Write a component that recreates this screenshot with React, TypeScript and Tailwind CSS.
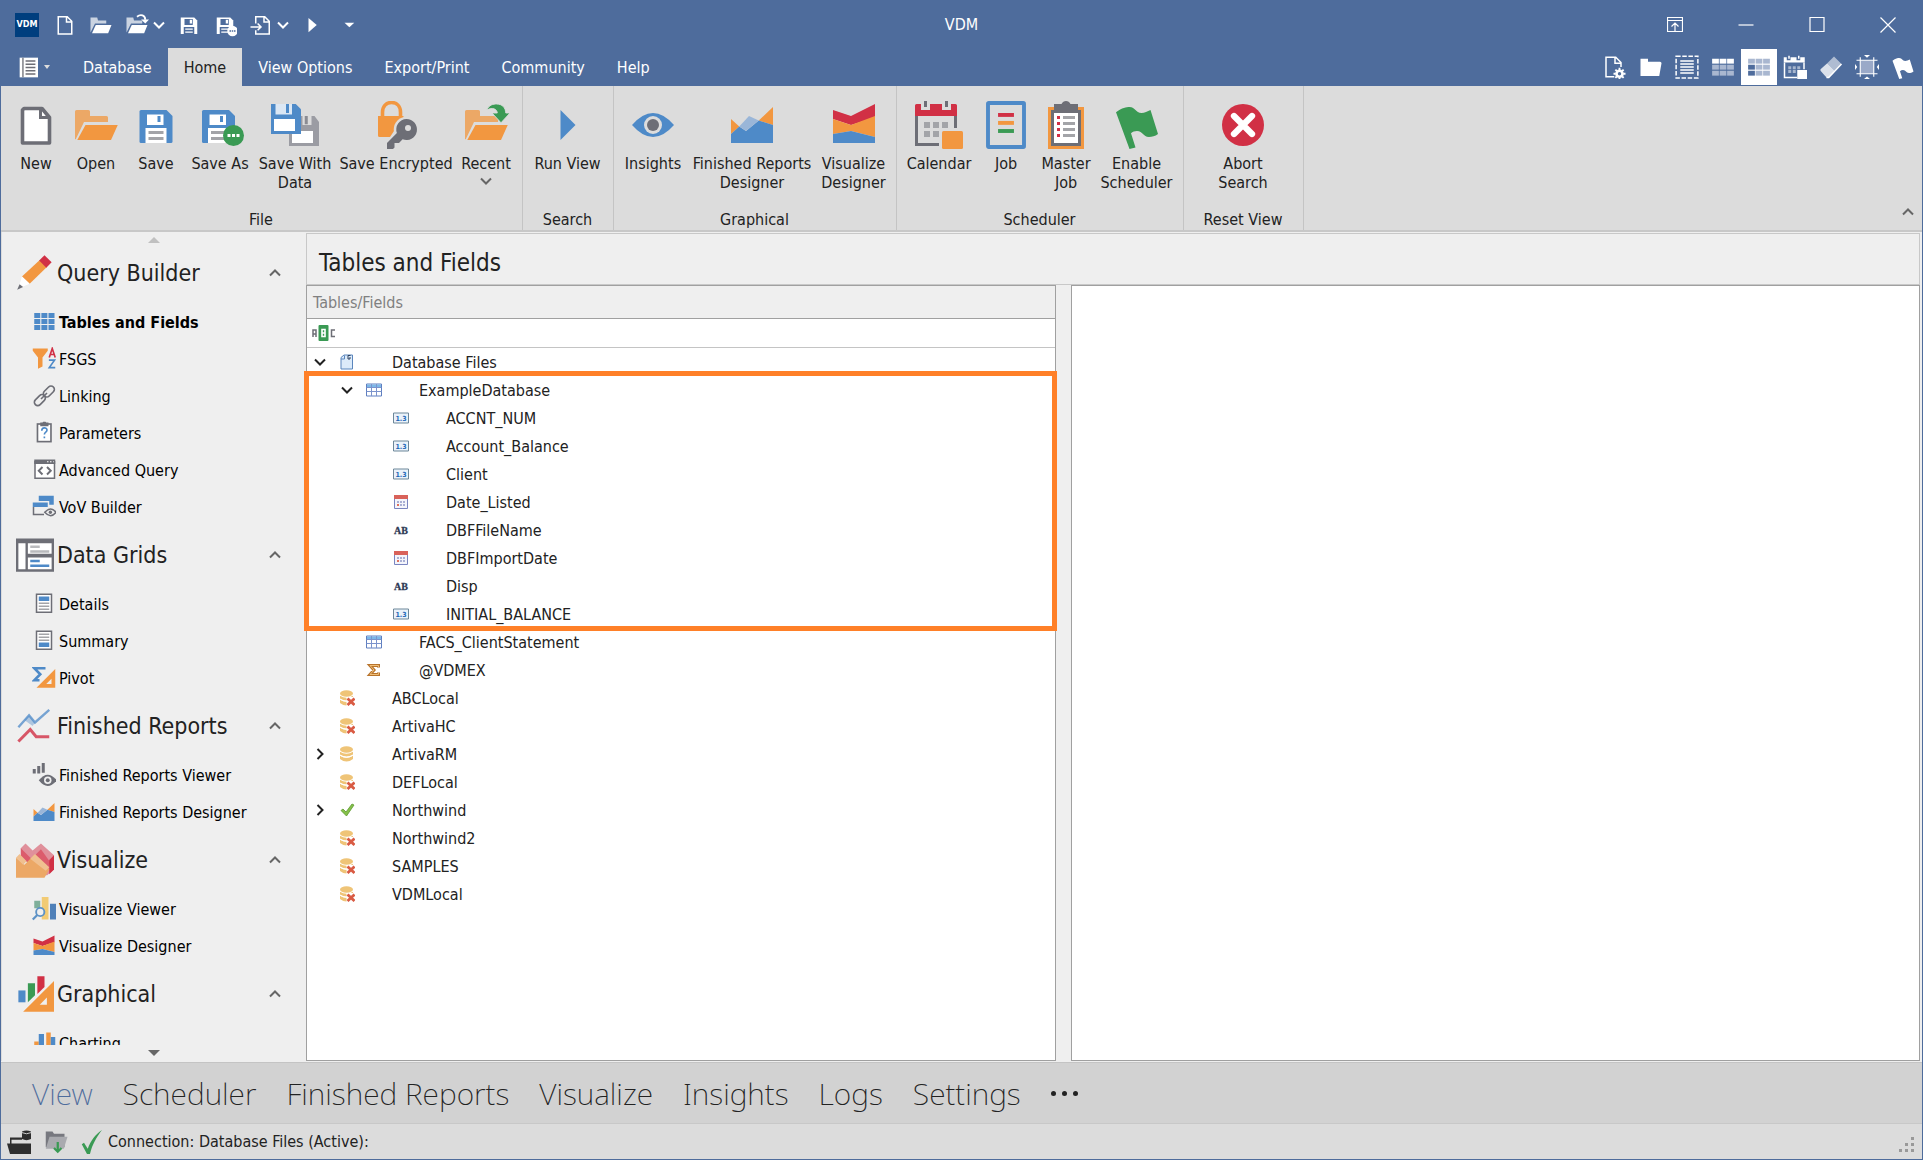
import type { ReactNode } from 'react'

const BLUE = '#4e8ac8'
const ORANGE = '#f29740'
const ORANGE_LIGHT = '#eca866'
const RED = '#d13045'
const GREEN = '#3a9a54'
const GRAY = '#6d6e76'
const GRAY_LIGHT = '#a3a4a8'

function Svg({ className = 'size-6', box = '0 0 32 32', children }: { className?: string; box?: string; children: ReactNode }) {
    return (
        <svg className={`shrink-0 ${className}`} viewBox={box} fill="none" aria-hidden="true">
            {children}
        </svg>
    )
}

function Chevron({ className = '', d = 'M1 1.5l5 5 5-5' }: { className?: string; d?: string }) {
    return (
        <svg className={`shrink-0 w-3 h-2 ${className}`} viewBox="0 0 12 8" fill="none" stroke="currentColor" strokeWidth="2" aria-hidden="true">
            <path d={d} />
        </svg>
    )
}

/* ---- ribbon drawings, 32 unit grid ---- */

const newDoc = (
    <>
        <path d="M8 5h12l5 6v17H7V6z" fill="#fff" stroke={GRAY} strokeWidth="2.4" strokeLinejoin="round" />
        <path d="M19 5v6h6" stroke={GRAY} strokeWidth="2" />
    </>
)

const openFolder = (
    <>
        <path d="M2 7q0-1 1-1h8q1 0 1 1v3h11q1 0 1 1v3H8L2.5 25.500H2z" fill={ORANGE_LIGHT} />
        <path d="M9 16h21.500L26 26H3.500z" fill={ORANGE} />
    </>
)

const floppy = (
    <>
        <path d="M6 6h17l4 4v17q0 1-1 1H6q-1 0-1-1V7q0-1 1-1z" fill={BLUE} />
        <path d="M10 9h11v7H10z" fill="#fff" />
        <path d="M17 10h2v4h-2z" fill={BLUE} />
        <path d="M9 18h14v10H9z" fill="#fff" />
        <path d="M11 21h10M11 25h10" stroke={GRAY_LIGHT} strokeWidth="2" />
    </>
)

const saveAs = (
    <>
        <g transform="translate(-1 0)">{floppy}</g>
        <circle cx="25" cy="23" r="7" fill={GREEN} />
        <path d="M21 22h2v2h-2zM24 22h2v2h-2zM27 22h2v2h-2z" fill="#fff" />
    </>
)

const saveWithData = (
    <>
        <path d="M12 10h17l3 4v16H12z" fill="#9b9ca3" />
        <path d="M21 10h6v6h-6z" fill="#dcdcdc" />
        <path d="M22.500 10h2v5.500h-2z" fill="#8a8b92" />
        <path d="M14 20h14v8H14z" fill="#fff" />
        <path d="M0 2h16.500L20 5.500V22H0z" fill={BLUE} />
        <path d="M3 2h11v7H3z" fill="#dbe7f4" />
        <path d="M10 2h2v6h-2z" fill={BLUE} />
        <path d="M2 12h14v8H2z" fill="#fff" />
    </>
)

const saveEncrypted = (
    <>
        <path d="M7 11V7.500C7 3.500 9.500 1 13 1s6 2.500 6 6.500V11" stroke={ORANGE} strokeWidth="2.400" />
        <path d="M4 10h17v3l-5 5-4 6H5q-1 0-1-1z" fill={ORANGE} />
        <circle cx="23" cy="19" r="8.500" fill="#dcdcdc" />
        <path d="M23 12a7 7 0 1 1-2.600 13.500L18 28h-3v3l-1 1h-4v-4l6.600-6.600A7 7 0 0 1 23 12z" fill={GRAY} />
        <circle cx="24" cy="18" r="2" fill="#dcdcdc" />
    </>
)

const recent = (
    <>
        {openFolder}
        <path d="M16.500 6C18 2.500 21 2 23 2c4 0 6 2.500 6.200 6H32l-6 6.500L20 8h3.500c0-2.500-3-4-7-2z" fill={GREEN} stroke="#dcdcdc" strokeWidth=".6" />
    </>
)

const play = <path d="M11 6l10 10-10 10z" fill={BLUE} />

const eye = (
    <>
        <path d="M2 16Q9 8 16 8t14 8q-7 8-14 8T2 16z" fill={BLUE} />
        <circle cx="16" cy="16" r="6" fill="#dcdcdc" />
        <circle cx="16" cy="16" r="4" fill={GRAY} />
    </>
)

const reportArea = (
    <>
        <path d="M2 12l5.500 5L2 22zM30 4l-9.500 9L30 16z" fill={ORANGE} />
        <path d="M2 22l5.500-5 4.500 3 8.500-7L30 16v12H2z" fill={BLUE} />
        <path d="M7.500 17L14 10l6.500 3L12 20z" fill="#9ab6d8" />
    </>
)

const visualizeArea = (
    <>
        <path d="M2 6l12 4 16-8v9l-16 5-12-4z" fill={RED} />
        <path d="M2 12l12 4 16-6v14l-16-4-12 2z" fill={ORANGE} />
        <path d="M2 22l12-2 16 4v4H2z" fill={BLUE} />
    </>
)

const calendar = (
    <>
        <path d="M1 10v19h15M27 10v8" stroke={GRAY} strokeWidth="2" />
        <path d="M0 3q0-1 1-1h3v4h6V2h8v4h6V2h3q1 0 1 1v7H0z" fill={RED} />
        <path d="M6 0h2v4H6zM20 0h2v4h-2z" fill={GRAY} />
        <path d="M6 14h4v4H6zM12 14h4v4h-4zM18 14h4v4h-4zM6 20h4v4H6zM12 20h4v4h-4z" fill={GRAY_LIGHT} />
        <rect x="18" y="20" width="14" height="12" rx="1" fill={ORANGE} />
    </>
)

const job = (
    <>
        <rect x="4" y="1.300" width="24" height="29.400" rx=".5" stroke={BLUE} strokeWidth="2.600" />
        <path d="M10.700 9.300h10.600" stroke={RED} strokeWidth="2.600" />
        <path d="M10.700 14.600h10.600" stroke={ORANGE} strokeWidth="2.600" />
        <path d="M10.700 20h10.600" stroke={GREEN} strokeWidth="2.600" />
    </>
)

const masterJob = (
    <>
        <path d="M4 4h24v28H4z" fill={ORANGE} />
        <path d="M6 6h2V2h5q1-2 3-2t3 2h5v4h2v24H6z" fill={GRAY} />
        <path d="M8 8h16v20H8z" fill="#fff" />
        <path d="M10 10h2v2h-2zM10 14h2v2h-2zM10 18h2v2h-2zM10 22h2v2h-2z" fill={RED} />
        <path d="M14 11h8M14 15h8M14 19h8M14 23h8" stroke={GRAY_LIGHT} strokeWidth="2" />
    </>
)

const flagPath = 'M2 7.500C6 4.500 9 4 11 4c4 0 4 4 8 4 2 0 4-1 6-2l5 16c-2 1.500-4 2-6 2-4 0-4-4-8-4-1.500 0-3 .5-4 1.500L15 31l-4 1z'

const abort = (
    <>
        <circle cx="16" cy="16" r="14" fill={RED} />
        <path d="M10 10l12 12M22 10L10 22" stroke="#fff" strokeWidth="4.200" strokeLinecap="round" />
    </>
)

const ribbon = [
    {
        title: 'File',
        items: [
            { label: 'New', icon: newDoc, width: 'w-[60px]' },
            { label: 'Open', icon: openFolder, width: 'w-[60px]' },
            { label: 'Save', icon: floppy, width: 'w-[60px]' },
            { label: 'Save As', icon: saveAs, width: 'w-[68px]' },
            { label: 'Save With Data', icon: saveWithData, width: 'w-[82px]' },
            { label: 'Save Encrypted', icon: saveEncrypted, width: 'w-[120px]' },
            { label: 'Recent', icon: recent, width: 'w-[60px]', menu: true },
        ],
    },
    { title: 'Search', items: [{ label: 'Run View', icon: play, width: 'w-[79px]' }] },
    {
        title: 'Graphical',
        items: [
            { label: 'Insights', icon: eye, width: 'w-[68px]' },
            { label: 'Finished Reports Designer', icon: reportArea, width: 'w-[130px]' },
            { label: 'Visualize Designer', icon: visualizeArea, width: 'w-[73px]' },
        ],
    },
    {
        title: 'Scheduler',
        items: [
            { label: 'Calendar', icon: calendar, width: 'w-[74px]' },
            { label: 'Job', icon: job, width: 'w-[60px]' },
            { label: 'Master Job', icon: masterJob, width: 'w-[60px]' },
            { label: 'Enable Scheduler', icon: <path d={flagPath} fill={GREEN} />, width: 'w-[81px]' },
        ],
    },
    { title: 'Reset View', items: [{ label: 'Abort Search', icon: abort, width: 'w-[108px] px-5' }] },
]

/* ---- title bar ---- */

const wDoc = <path d="M7 5h12l6 6v17H7zM18 5v7h7" stroke="#fff" strokeWidth="2" />
const wOpen = (
    <>
        <path d="M2 6h9l1 4h11v4H8L2 26z" fill="#fff" opacity=".7" />
        <path d="M9 16h21l-4.500 11H4z" fill="#fff" />
    </>
)
const wFloppy = (
    <>
        <path d="M5 6h18l4 4v18H5z" fill="#fff" />
        <path d="M10 8h11v8H10zM9 18.500h14V28H9z" fill="#4e6c9c" />
        <path d="M17 9h3v5h-3z" fill="#fff" />
        <path d="M11 21.500h10M11 25.500h10" stroke="#fff" strokeWidth="1.500" />
    </>
)

const quickAccess = [
    { label: 'New', icon: wDoc },
    { label: 'Open', icon: wOpen },
    {
        label: 'Recent',
        menu: true,
        icon: (
            <>
                {wOpen}
                <path d="M16 5c5-4 11-2 11 4" stroke="#fff" strokeWidth="2.500" />
                <path d="M21.500 8.500H32L27 14z" fill="#fff" />
            </>
        ),
    },
    { label: 'Save', icon: wFloppy },
    {
        label: 'Save As',
        icon: (
            <>
                {wFloppy}
                <circle cx="26" cy="24" r="7" fill="#fff" />
                <path d="M22 23h2v2h-2zM25 23h2v2h-2zM28 23h2v2h-2z" fill="#4e6c9c" />
            </>
        ),
    },
    { label: 'Import', menu: true, icon: <path d="M9 14V5h12l6 6v17H9v-5M20 5v7h7M2 18.500h14M11.500 14l4.500 4.500-4.500 4.500" stroke="#fff" strokeWidth="2" /> },
    { label: 'Run', icon: <path d="M10 6.500l11 9.500-11 9.500z" fill="#fff" /> },
    { label: 'Customize', icon: <path d="M10 13h13l-6.500 6z" fill="#fff" /> },
]

const windowButtons = [
    { label: 'Ribbon display', d: 'M.5.500h15v14H.5zM.5 3.500h15M8 14V7M4.500 9.500L8 6l3.500 3.500' },
    { label: 'Minimize', d: 'M.5 8h15' },
    { label: 'Maximize', d: 'M1 .5h14v14H1z' },
    { label: 'Close', d: 'M.5.500l15 15M15.500.500l-15 15' },
]

const tabs = ['Database', 'Home', 'View Options', 'Export/Print', 'Community', 'Help']

function cells(first: (r: number, c: number) => boolean, on: string, off: string) {
    return [0, 1, 2].flatMap(r =>
        [0, 1, 2].map(c => (
            <rect key={`${r}${c}`} x={1.500 + c * 10} y={5 + r * 8} width="9" height="6.500" fill={first(r, c) ? on : off} />
        ))
    )
}

const viewTools = [
    {
        label: 'View settings',
        icon: (
            <>
                <path d="M15 29H4V3h13l7 7v6M16 3v8h8" stroke="#fff" strokeWidth="2" />
                <circle cx="22" cy="25" r="4" stroke="#fff" strokeWidth="3.500" />
                <path d="M22 17v3M22 30v3M14 25h3M27 25h3M16.500 19.500l2 2M25.500 28.500l2 2M27.500 19.500l-2 2M18.500 28.500l-2 2" stroke="#fff" strokeWidth="2.500" />
            </>
        ),
    },
    { label: 'Folder', icon: <path d="M2 5h10v4h16q2 0 2 2l-3 17H2z" fill="#fff" /> },
    {
        label: 'Select all',
        icon: (
            <>
                <rect x="1.500" y="1.500" width="29" height="29" stroke="#fff" strokeWidth="2" strokeDasharray="6 2.200" />
                <path d="M7 8h18M7 12h18M7 16h18M7 20h18M7 24h18" stroke="#fff" strokeWidth="2" />
            </>
        ),
    },
    { label: 'Header row', icon: <>{cells(r => r === 0, '#ffffff', '#a9b7d0')}</> },
    { label: 'Field grid', active: true, icon: <>{cells((r, c) => c === 0 && r > 0, '#4e6c9c', '#a9b7d0')}</> },
    {
        label: 'Calendar',
        icon: (
            <>
                <path d="M2 10v20h17M28 10v9" stroke="#fff" strokeWidth="2" />
                <path d="M1 3h4v4h5V3h8v4h5V3h6v7H1z" fill="#fff" />
                <path d="M7 1h2v4H7zM20 1h2v4h-2z" fill="#fff" />
                <path d="M7 15h4v4H7zM13 15h4v4h-4zM19 15h4v4h-4zM7 20h4v4H7zM13 20h4v4h-4z" fill="#fff" opacity=".5" />
                <path d="M19 20h14v12H19z" fill="#fff" />
            </>
        ),
    },
    {
        label: 'Clear',
        icon: (
            <>
                <path d="M20 2l10 10-9 9-10-10z" fill="#fff" opacity=".55" />
                <path d="M11 11l10 10-8 9h-3l-8-9v-2z" fill="#fff" opacity=".8" />
                <path d="M30 12L13 30h-3" stroke="#fff" strokeWidth="2" />
            </>
        ),
    },
    {
        label: 'Fit',
        icon: (
            <>
                <path d="M7 7h18v18H7z" fill="#9aa9c8" />
                <path d="M7 3v26M25 3v26M2 7h28M2 25h28" stroke="#fff" strokeWidth="1.500" />
                <path d="M12 0h8l-4 3.500zM12 32h8l-4-3.500zM0 12v8l3-4zM32 12v8l-3-4z" fill="#fff" />
            </>
        ),
    },
    { label: 'Flag', icon: <path d={flagPath} fill="#fff" /> },
]

/* ---- side navigation ---- */

const pencil = (
    <>
        <path d="M5 19L20 5l6 6-14.500 14z" fill={ORANGE} />
        <path d="M19.500 5.500L24 1l6 6-4.500 4.500z" fill={RED} />
        <path d="M5 19l6.500 6L2 29z" fill="#fff" />
        <path d="M3 25.500l3 2.300L1 30z" fill={GRAY} />
    </>
)
const dataGrid = (
    <>
        <path d="M0 2h32v28H0z" fill={GRAY} />
        <path d="M2 6h6v22H2zM10 6h20v9H10zM10 18h20v10H10z" fill="#fff" />
        <path d="M12 9h8M12 13h16" stroke="#b9babd" strokeWidth="2" />
        <path d="M12 21h8M12 25h16" stroke={BLUE} strokeWidth="2" />
    </>
)
const trendLines = (
    <>
        <path d="M2 17l9-10 5 6L28 2.500" stroke={BLUE} strokeWidth="2" opacity=".75" />
        <path d="M7 11l4-4 5 6-2 3z" fill={BLUE} opacity=".4" />
        <path d="M2 29l10-10 5 6h11" stroke={RED} strokeWidth="2.500" opacity=".8" />
    </>
)
const area3d = (
    <>
        <path d="M4 6l4-4 6 6 7-6 11 10v12l-6 5-20-14z" fill="#e0909b" />
        <path d="M4 6l9 9 8-8 8 11-3 8L4 15z" fill="#dc5c6c" />
        <path d="M28 16l4-4v12l-4 4z" fill={RED} />
        <path d="M0 14l7 6 8-8 13 12-4 7H0z" fill={ORANGE_LIGHT} />
        <path d="M0 14l3-3 6 6-3 3zM12 15l4-4 12 11-3 3z" fill="#f0c090" />
    </>
)
const barsRuler = (
    <>
        <path d="M2 13h6v10H2z" fill={BLUE} />
        <path d="M10 7h6v10l-6 6z" fill={GREEN} />
        <path d="M18 1h6v9l-6 6z" fill={RED} />
        <path d="M32 5v26H6z" fill={ORANGE} />
        <path d="M26 19v6h-6z" fill="#efefef" />
    </>
)

const sections = [
    {
        title: 'Query Builder',
        icon: pencil,
        items: [
            {
                label: 'Tables and Fields',
                current: true,
                icon: <path d="M3 4h8v6.500H3zM12.500 4h8v6.500h-8zM22 4h8v6.500h-8zM3 12h8v6.500H3zM12.500 12h8v6.500h-8zM22 12h8v6.500h-8zM3 20h8v6.500H3zM12.500 20h8v6.500h-8zM22 20h8v6.500h-8z" fill={BLUE} />,
            },
            {
                label: 'FSGS',
                icon: (
                    <>
                        <path d="M1 2h20v3l-7 9v12l-6 3V14L1 5z" fill={ORANGE} />
                        <path d="M23 14l4-12 4 12M24.500 10h5" stroke={RED} strokeWidth="2.200" />
                        <path d="M22.500 17.500H30L23 27.500h8" stroke={BLUE} strokeWidth="2.200" />
                    </>
                ),
            },
            {
                label: 'Linking',
                icon: (
                    <g stroke={GRAY} strokeWidth="2.200">
                        <rect x="14" y="5.500" width="17" height="9" rx="4.500" transform="rotate(-45 22.500 10)" />
                        <rect x="2" y="17" width="17" height="9" rx="4.500" transform="rotate(-45 10.500 21.500)" />
                        <path d="M12 20l8-8" />
                    </g>
                ),
            },
            {
                label: 'Parameters',
                icon: (
                    <>
                        <rect x="7.300" y="4" width="18" height="23.500" fill="#fff" stroke={GRAY} strokeWidth="2.200" />
                        <path d="M11 2h3l1-1h3l1 1h3v5H11z" fill={GRAY} />
                        <path d="M13 13c0-5 7-5 7-1 0 3-3.500 2.500-3.500 6M16.500 20.500V23" stroke={BLUE} strokeWidth="2.200" />
                    </>
                ),
            },
            {
                label: 'Advanced Query',
                icon: (
                    <>
                        <path d="M4 5h26v22H4z" fill="#fff" stroke={GRAY} strokeWidth="2" />
                        <path d="M3 2h28v6H3z" fill={GRAY} />
                        <path d="M20 5h2M24 5h2M28 5h1" stroke="#fff" strokeWidth="1.500" />
                        <path d="M14 12l-5 5 5 5M20 12l5 5-5 5" stroke={GRAY} strokeWidth="2.600" />
                    </>
                ),
            },
            {
                label: 'VoV Builder',
                icon: (
                    <>
                        <path d="M9 1h20v12h-6V8H9z" fill={BLUE} />
                        <path d="M1 10h20v6H1z" fill={BLUE} />
                        <path d="M2 16v10h14" stroke={GRAY} strokeWidth="2" />
                        <path d="M17 23q8-9 15 0-7 9-15 0z" fill="#efefef" stroke={GRAY} strokeWidth="2" />
                        <circle cx="24.500" cy="23" r="2.200" fill={GRAY} />
                    </>
                ),
            },
        ],
    },
    {
        title: 'Data Grids',
        icon: dataGrid,
        items: [
            {
                label: 'Details',
                icon: (
                    <>
                        <rect x="6" y="3" width="20" height="24" fill="#fff" stroke={GRAY} strokeWidth="2" />
                        <path d="M9 6h14v6H9z" fill={BLUE} />
                        <path d="M9 15h14M9 19h14M9 23h14" stroke={GRAY_LIGHT} strokeWidth="2" />
                    </>
                ),
            },
            {
                label: 'Summary',
                icon: (
                    <>
                        <rect x="6" y="3" width="20" height="24" fill="#fff" stroke={GRAY} strokeWidth="2" />
                        <path d="M9 18h14v6H9z" fill={BLUE} />
                        <path d="M9 7h14M9 11h14M9 15h14" stroke={GRAY_LIGHT} strokeWidth="2" />
                    </>
                ),
            },
            {
                label: 'Pivot',
                icon: (
                    <>
                        <path d="M18 3H3l8 8-8 8h7" stroke={BLUE} strokeWidth="3.500" />
                        <path d="M31 4v25H6z" fill={ORANGE} />
                        <path d="M26 17v7h-7z" fill="#efefef" />
                    </>
                ),
            },
        ],
    },
    {
        title: 'Finished Reports',
        icon: trendLines,
        items: [
            {
                label: 'Finished Reports Viewer',
                icon: (
                    <>
                        <path d="M1 8h4v6H1zM7 4h4v10H7zM13 0h4v13h-4z" fill={GRAY} />
                        <path d="M9 23q12-15 24 0-12 15-24 0z" fill={GRAY} />
                        <circle cx="21" cy="23" r="5" fill="#efefef" />
                        <circle cx="21" cy="23" r="2.600" fill={GRAY} />
                    </>
                ),
            },
            { label: 'Finished Reports Designer', icon: reportArea },
        ],
    },
    {
        title: 'Visualize',
        icon: area3d,
        items: [
            {
                label: 'Visualize Viewer',
                icon: (
                    <>
                        <path d="M3 5h8v10H3z" fill="#7faf9a" />
                        <path d="M13 0h9v30h-9z" fill="#f2cb74" />
                        <path d="M24 9h8v21h-8z" fill="#4f80b8" />
                        <circle cx="11" cy="20" r="5.500" fill="#efefef" stroke="#5d92c6" strokeWidth="2.500" />
                        <path d="M7 24l-6 6" stroke="#5d92c6" strokeWidth="3" />
                    </>
                ),
            },
            { label: 'Visualize Designer', icon: visualizeArea },
        ],
    },
    {
        title: 'Graphical',
        icon: barsRuler,
        items: [
            {
                label: 'Charting',
                icon: (
                    <>
                        <path d="M3 14h6v14H3zM19 2h6v26h-6z" fill={ORANGE} />
                        <path d="M9 4h7v24H9zM25 8h6v20h-6z" fill={BLUE} />
                    </>
                ),
            },
        ],
    },
]

/* ---- tree ---- */

const treeIcons: Record<string, ReactNode> = {
    files: (
        <>
            <path d="M2 3.500L5 1h8.500v14H2z" fill="#dcebfa" stroke="#5b86bd" />
            <path d="M2 5h3.500V1.500" stroke="#5b86bd" />
            <path d="M11.500 1.500H9V5h2V3" stroke="#2b3f5c" />
        </>
    ),
    table: (
        <>
            <path d="M.5 2h15v12H.5z" fill="#fff" stroke="#5f7fc0" />
            <path d="M1 2.500h14V5H1z" fill="#7db8e8" />
            <path d="M.5 5.500h15M.5 9.500h15M5.500 2v12M10.500 2v12" stroke="#7b93cc" />
        </>
    ),
    number: (
        <>
            <path d="M.5 3h15v10H.5z" fill="#eaf2fa" stroke="#6d8799" />
            <text x="8" y="10.700" textAnchor="middle" fontSize="7" fontWeight="700" fill="#2468b8">1.3</text>
        </>
    ),
    date: (
        <>
            <path d="M1.500 1.500h13v13h-13z" fill="#f4f5fb" stroke="#7a85c0" />
            <path d="M1 1h14v4H1z" fill="#d9625a" />
            <path d="M7 7h2v2H7zM10 7h2v2h-2zM4 7h2v2H4zM7 10h2v2H7zM10 10h2v2h-2z" fill="#aab0d4" />
            <path d="M4 10h2v2H4z" fill="#e0705c" />
        </>
    ),
    text: <text x="8" y="11.500" textAnchor="middle" fontSize="10" fontWeight="700" fontFamily="Liberation Serif, serif" fill="#2e3a55" stroke="#2e3a55" strokeWidth=".3">AB</text>,
    sigma: (
        <>
            <path d="M12.500 5.500V3.500H4L8 8l-4 4.500h8.500v-2" stroke="#b8742c" strokeWidth="3" />
            <path d="M12.500 5V3.500H4L8 8l-4 4.500h8.500V11" stroke="#f0bf78" strokeWidth="1" />
        </>
    ),
    db: (
        <>
            <ellipse cx="7.500" cy="3.500" rx="6.500" ry="3.300" fill="#efc477" />
            <path d="M1 5.800q6.500 4 13 0V8.500q-6.500 4-13 0zM1 9.800q6.500 4 13 0V13q-6.500 5-13 0z" fill="#efc477" />
            <path d="M1 9.300q6.500 4 13 0" stroke="#fff" />
        </>
    ),
    ok: <path d="M2 8.500l2-1.500 3 3 6-8 2 1L7.500 14z" fill="#86c04a" stroke="#5c9a2e" strokeWidth=".8" />,
}
treeIcons.dbError = (
    <>
        {treeIcons.db}
        <path d="M7.500 7H16v9H7.500z" fill="#fff" />
        <path d="M8.500 8.500l7 6.500M15.500 8.500l-7 6.500" stroke="#d95b43" strokeWidth="2.800" />
    </>
)

type Row = { level: number; label: string; icon: string; state?: 'open' | 'closed' }

const exampleRows: Row[] = [
    { level: 1, label: 'ExampleDatabase', icon: 'table', state: 'open' },
    { level: 2, label: 'ACCNT_NUM', icon: 'number' },
    { level: 2, label: 'Account_Balance', icon: 'number' },
    { level: 2, label: 'Client', icon: 'number' },
    { level: 2, label: 'Date_Listed', icon: 'date' },
    { level: 2, label: 'DBFFileName', icon: 'text' },
    { level: 2, label: 'DBFImportDate', icon: 'date' },
    { level: 2, label: 'Disp', icon: 'text' },
    { level: 2, label: 'INITIAL_BALANCE', icon: 'number' },
]

const otherRows: Row[] = [
    { level: 1, label: 'FACS_ClientStatement', icon: 'table' },
    { level: 1, label: '@VDMEX', icon: 'sigma' },
    { level: 0, label: 'ABCLocal', icon: 'dbError' },
    { level: 0, label: 'ArtivaHC', icon: 'dbError' },
    { level: 0, label: 'ArtivaRM', icon: 'db', state: 'closed' },
    { level: 0, label: 'DEFLocal', icon: 'dbError' },
    { level: 0, label: 'Northwind', icon: 'ok', state: 'closed' },
    { level: 0, label: 'Northwind2', icon: 'dbError' },
    { level: 0, label: 'SAMPLES', icon: 'dbError' },
    { level: 0, label: 'VDMLocal', icon: 'dbError' },
]

const indents = ['', 'pl-[27px]', 'pl-[54px]']

function TreeRow({ row }: { row: Row }) {
    return (
        <div role="treeitem" aria-level={row.level + 1} className={`flex h-7 items-center ${indents[row.level]}`}>
            <span className="flex w-[26px] shrink-0 justify-center text-[#222]">
                {row.state === 'open' && <Chevron />}
                {row.state === 'closed' && <Chevron className="-rotate-90" />}
            </span>
            <span className="flex w-[27px] shrink-0 justify-center">
                <Svg className="size-4" box="0 0 16 16">{treeIcons[row.icon]}</Svg>
            </span>
            <span className="ml-8 pt-0.5">{row.label}</span>
        </div>
    )
}

const modules = ['View', 'Scheduler', 'Finished Reports', 'Visualize', 'Insights', 'Logs', 'Settings']

function TitleBar() {
    return (
        <header className="bg-[#4e6c9c] text-white">
            <div className="relative flex h-[47px] items-center pl-[14px]">
                <span className="mr-2 flex size-6 items-center justify-center bg-[#003e7e] text-[9px] font-bold">VDM</span>
                {quickAccess.map(q => (
                    <button key={q.label} aria-label={q.label} className="flex h-9 items-center px-[6px]">
                        <Svg>{q.icon}</Svg>
                        {q.menu && <Chevron className="ml-1" />}
                    </button>
                ))}
                <h1 className="absolute left-1/2 -translate-x-1/2">VDM</h1>
                <div className="ml-auto flex">
                    {windowButtons.map(w => (
                        <button key={w.label} aria-label={w.label} className="flex h-9 w-[71px] items-center justify-center pl-0.5">
                            <svg className="size-4" viewBox="0 0 16 16" fill="none" stroke="#fff" strokeWidth="1.200">
                                <path d={w.d} />
                            </svg>
                        </button>
                    ))}
                </div>
            </div>
            <div className="flex h-[38px] items-stretch">
                <button aria-label="Application menu" className="flex w-[66px] items-center gap-1 pl-[18px]">
                    <Svg className="size-[21px]">
                        <path d="M1 1h28v30H1z" fill="#fff" />
                        <path d="M6 1v30" stroke={GRAY} strokeWidth="2" />
                        <path d="M10 6h15M10 11h15M10 16h15M10 21h15M10 26h15" stroke={GRAY} strokeWidth="2.200" />
                    </Svg>
                    <svg className="h-1 w-1.5" viewBox="0 0 6 4"><path d="M0 0h6L3 4z" fill="#ddd" /></svg>
                </button>
                <nav className="flex" role="tablist">
                    {tabs.map(t => (
                        <button key={t} role="tab" aria-selected={t === 'Home'} className={t === 'Home' ? 'bg-[#dcdcdc] px-4 pt-0.5 text-[#222]' : 'px-4 pt-0.5'}>
                            {t}
                        </button>
                    ))}
                </nav>
                <div className="ml-auto mr-px flex">
                    {viewTools.map(v => (
                        <button key={v.label} aria-label={v.label} className={`flex size-9 items-center justify-center self-center ${v.active ? 'bg-white' : ''}`}>
                            <Svg>{v.icon}</Svg>
                        </button>
                    ))}
                </div>
            </div>
        </header>
    )
}

function Ribbon() {
    return (
        <div className="flex h-[146px] shrink-0 border-b-2 border-[#c8c8c8] bg-[#dcdcdc]">
            {ribbon.map(g => (
                <section key={g.title} className="flex flex-col border-r border-[#c4c4c4] pl-[5px] pr-[6px]">
                    <div className="flex flex-1">
                        {g.items.map(i => (
                            <button key={i.label} className={`flex flex-col items-center pt-[15px] leading-[19px] ${i.width}`}>
                                <Svg className="mb-[5px] size-12">{i.icon}</Svg>
                                {i.label}
                                {'menu' in i && <Chevron className="mt-1 text-[#666]" />}
                            </button>
                        ))}
                    </div>
                    <h2 className="pb-px text-center leading-[19px]">{g.title}</h2>
                </section>
            ))}
            <button aria-label="Collapse ribbon" className="ml-auto self-end px-2 pb-[14px] text-[#666]">
                <Chevron className="rotate-180" />
            </button>
        </div>
    )
}

function Sidebar() {
    return (
        <aside className="flex w-[305px] shrink-0 flex-col border-l border-[#dcdcdc] text-black">
            <div className="flex h-[11px] shrink-0 items-end justify-center">
                <svg className="h-[6px] w-3" viewBox="0 0 12 6"><path d="M0 6h12L6 0z" fill="#c0c0c0" /></svg>
            </div>
            <div className="min-h-0 flex-1 overflow-hidden">
                {sections.map(s => (
                    <section key={s.title}>
                        <h2 className="flex h-[60px] items-center pl-[14px] pr-[25px] text-[23px] text-[#222]">
                            <Svg className="mr-[3px] size-[38px]">{s.icon}</Svg>
                            <span>{s.title}</span>
                            <button aria-label={`Collapse ${s.title}`} className="ml-auto flex text-[#666]">
                                <Chevron className="rotate-180" />
                            </button>
                        </h2>
                        <ul>
                            {s.items.map(i => (
                                <li key={i.label}>
                                    <a href="#" className={`flex h-[37px] items-center pl-[30px] ${'current' in i ? 'font-bold' : ''}`}>
                                        <Svg className="mr-[3px] size-6">{i.icon}</Svg>
                                        <span className="pt-0.5">{i.label}</span>
                                    </a>
                                </li>
                            ))}
                        </ul>
                    </section>
                ))}
            </div>
            <div className="flex h-4 shrink-0 items-center justify-center">
                <svg className="h-[6px] w-3" viewBox="0 0 12 6"><path d="M0 0h12L6 6z" fill="#666" /></svg>
            </div>
        </aside>
    )
}

function FieldTree() {
    return (
        <div className="flex w-[750px] shrink-0 flex-col border border-[#a0a0a0] bg-white">
            <div className="flex h-[33px] items-center border-b border-[#a0a0a0] bg-[#efefef] pl-[6px] pt-0.5 text-[#808080]">Tables/Fields</div>
            <label className="flex h-[29px] items-center border-b border-[#c4c4c4] pl-[5px]">
                <Svg className="h-[18px] w-6" box="0 0 24 18">
                    <rect x="6.500" y="1" width="10" height="16" rx="1" fill={GREEN} />
                    <path d="M1 13V6h3v7M1 10h3M23 6h-3.500v6.500H23" stroke={GRAY} strokeWidth="1.500" />
                    <path d="M10 5.500h3v7h-3zM10 9h3" stroke="#fff" strokeWidth="1.600" />
                </Svg>
                <input type="text" aria-label="Filter fields" className="h-full flex-1 px-2 outline-none" />
            </label>
            <div role="tree">
                <TreeRow row={{ level: 0, label: 'Database Files', icon: 'files', state: 'open' }} />
                <div className="relative">
                    {exampleRows.map(r => <TreeRow key={r.label} row={r} />)}
                    {/* highlight around the expanded database */}
                    <div className="pointer-events-none absolute -bottom-[3px] -left-[3px] -right-0.5 -top-[5px] border-5 border-[#ff8028]" />
                </div>
                {otherRows.map(r => <TreeRow key={r.label} row={r} />)}
            </div>
        </div>
    )
}

function StatusBar() {
    return (
        <footer className="flex h-9 shrink-0 items-center border-t border-[#c8c8c8] bg-[#dcdcdc] pl-[6px]">
            <Svg className="mr-[14px] size-6">
                <path d="M0 18h4v-8h16v3h-14v5h26v14H4z" fill="#2e2e2e" />
                <path d="M20 2q6-3 12 0v10q-6 3-12 0z" fill="#2e2e2e" />
                <path d="M20 3.500q6 3 12 0" stroke="#dcdcdc" strokeWidth="1.200" />
            </Svg>
            <Svg className="mr-3 size-6">
                <path d="M1 2h9l2 3h14v18H1z" fill="#77787f" />
                <path d="M6 9h24l-5 16H1z" fill="#a9aaaf" />
                <path d="M17 16v12M12 24l5 5 5-5" stroke={GREEN} strokeWidth="3" />
            </Svg>
            <Svg className="mr-[3px] size-6">
                <path d="M1 19l3-2 5 8C13 14 19 6 28 0 21 9 15 19 12 32H8z" fill={GREEN} />
            </Svg>
            <p className="text-[#222]">Connection: Database Files (Active):</p>
            <svg className="mb-1 mr-1 ml-auto size-5 self-end" viewBox="0 0 20 20" fill="#999" aria-hidden="true">
                <path d="M13 2h3v3h-3zM13 8h3v3h-3zM13 14h3v3h-3zM7 8h3v3H7zM7 14h3v3H7zM1 14h3v3H1z" />
            </svg>
        </footer>
    )
}

export default function App() {
    return (
        <div className="flex h-screen flex-col border border-[#4e6c9c] bg-[#efefef] font-['DejaVu_Sans_Condensed','Noto_Sans',sans-serif] text-base text-[#222]">
            <TitleBar />
            <Ribbon />
            <div className="flex min-h-0 flex-1 pb-px">
                <Sidebar />
                <main className="flex min-w-0 flex-1 flex-col pr-0.5 pt-px">
                    <h2 className="flex h-[52px] shrink-0 items-center border border-[#c8c8c8] pl-3 pt-2 text-2xl">Tables and Fields</h2>
                    <div className="flex min-h-0 flex-1 gap-[15px]">
                        <FieldTree />
                        <div className="flex-1 border border-[#a0a0a0] bg-white" />
                    </div>
                </main>
            </div>
            <nav className="flex h-[61px] shrink-0 items-center gap-[30px] border-t border-[#c4c4c4] bg-[#d2d2d2] pl-[31px] font-['Noto_Sans','Open_Sans',sans-serif] text-[30px] font-extralight">
                {modules.map(m => (
                    <button key={m} className={m === 'View' ? 'text-[#4e6c9c]' : ''}>{m}</button>
                ))}
                <button aria-label="More" className="flex gap-[6px]">
                    <span className="size-[5px] rounded-full bg-[#222]" />
                    <span className="size-[5px] rounded-full bg-[#222]" />
                    <span className="size-[5px] rounded-full bg-[#222]" />
                </button>
            </nav>
            <StatusBar />
        </div>
    )
}
